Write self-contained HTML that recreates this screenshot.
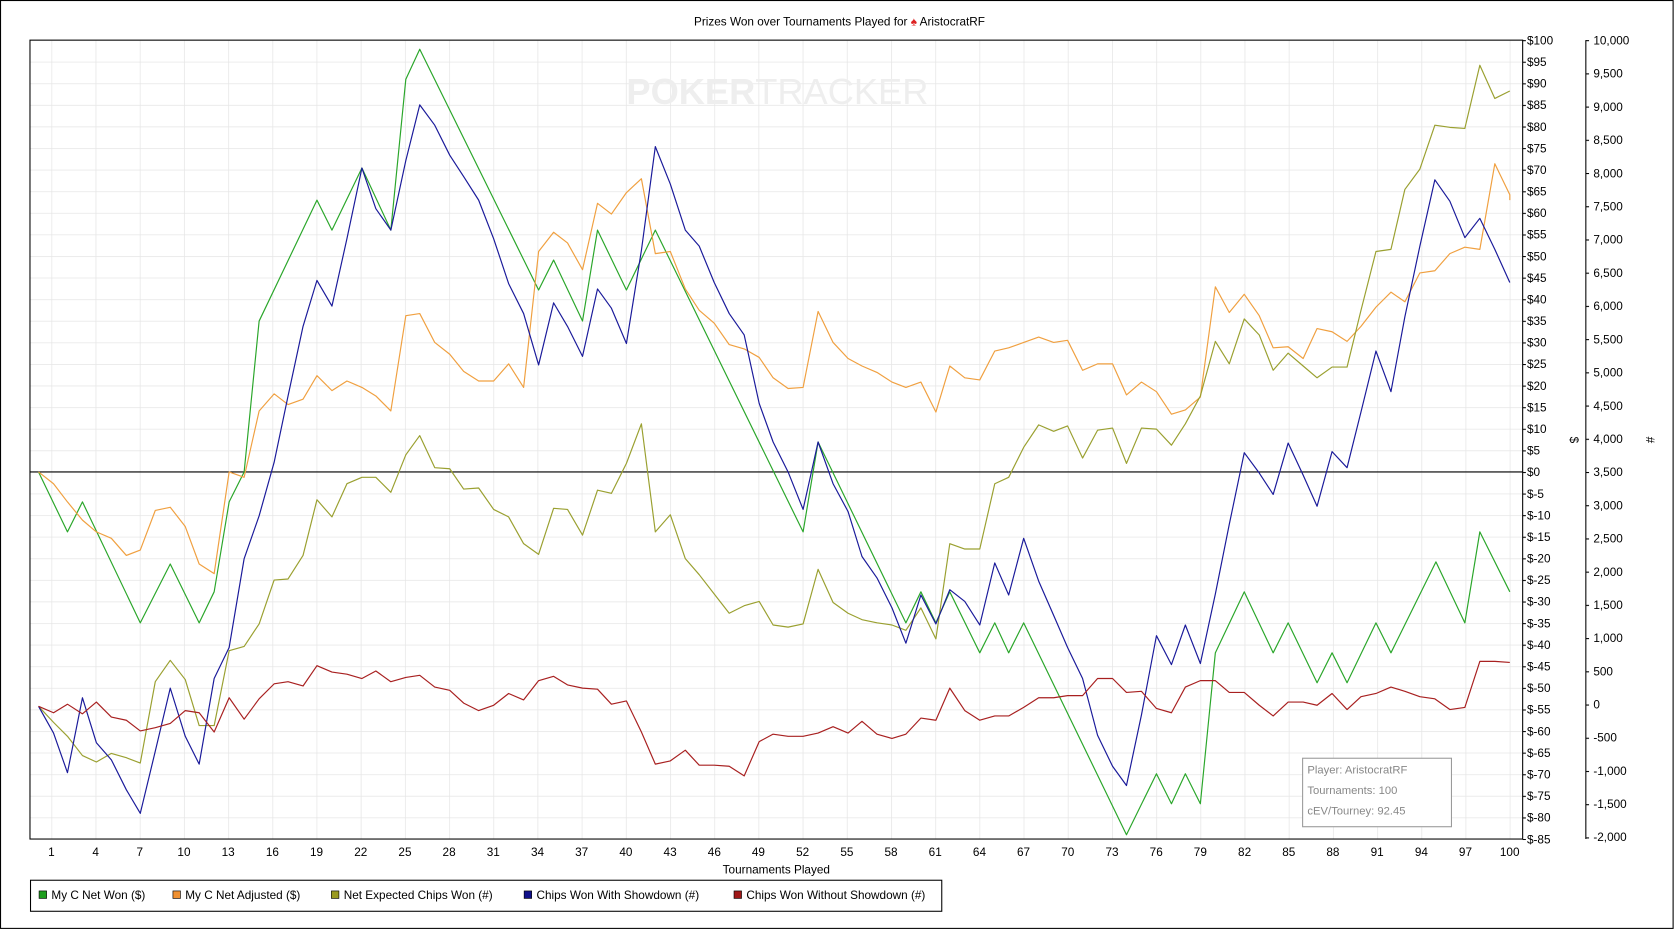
<!DOCTYPE html>
<html><head><meta charset="utf-8"><style>
html,body{margin:0;padding:0;background:#fff;}
svg{display:block;}
text{font-family:"Liberation Sans",Arial,sans-serif;}
</style></head><body>
<svg width="1679" height="930" viewBox="0 0 1568 869" preserveAspectRatio="none" xmlns="http://www.w3.org/2000/svg">
<defs>
<pattern id="gh" x="0" y="37.5" width="2000" height="20.175" patternUnits="userSpaceOnUse"><line x1="0" y1="0.3" x2="2000" y2="0.3" stroke="#e6e6e6" stroke-width="0.8"/></pattern>
<pattern id="gv" x="48" y="0" width="41.27" height="2000" patternUnits="userSpaceOnUse"><line x1="0.3" y1="0" x2="0.3" y2="2000" stroke="#e6e6e6" stroke-width="0.8"/></pattern>
<pattern id="t1" x="0" y="37.5" width="10" height="20.175" patternUnits="userSpaceOnUse"><line x1="0" y1="0.5" x2="10" y2="0.5" stroke="#000" stroke-width="1"/></pattern>
<pattern id="t2" x="0" y="37.5" width="10" height="31.04" patternUnits="userSpaceOnUse"><line x1="0" y1="0.5" x2="10" y2="0.5" stroke="#000" stroke-width="1"/></pattern>
</defs>
<rect x="0.5" y="0.5" width="1562" height="867" fill="#fff" stroke="#000" stroke-width="1"/>
<text x="784" y="24" font-size="11" text-anchor="middle">Prizes Won over Tournaments Played for <tspan fill="#d22">♠</tspan> AristocratRF</text>
<rect x="28" y="37.5" width="1394" height="746.5" fill="url(#gh)"/>
<rect x="28" y="37.5" width="1394" height="746.5" fill="url(#gv)"/>
<text x="585" y="97" font-size="34" font-weight="bold" fill="#eeeeee" textLength="282" lengthAdjust="spacingAndGlyphs">POKER<tspan font-weight="normal">TRACKER</tspan></text>
<line x1="28" y1="441" x2="1422" y2="441" stroke="#000" stroke-width="1"/>
<g fill="none" stroke-width="1.1" stroke-linejoin="round">
<polyline stroke="#2aa62a" points="36,441 63,497 77,469 131,582 159,527 186,582 200,553 214,469 228,441 242,300 296,187 310,215 338,157 365,215 379,74 392,46 503,271 517,243 544,300 558,215 585,271 612,215 750,497 764,413 846,582 860,553 874,582 887,553 915,610 929,582 942,610 956,582 1052,780 1080,723 1094,751 1107,723 1121,751 1135,610 1162,553 1189,610 1203,582 1230,638 1244,610 1258,638 1285,582 1299,610 1341,525 1368,582 1382,497 1410,553"/>
<polyline stroke="#f0a040" points="36,441 50,452 63,469 77,486 90,497 104,503 118,519 131,514 145,477 159,474 173,492 186,527 200,536 214,441 228,446 242,384 256,368 269,378 283,373 296,351 310,365 324,356 338,362 351,370 365,384 379,295 392,293 406,320 420,331 433,347 447,356 461,356 475,340 489,362 503,235 517,217 530,227 544,252 558,190 571,200 585,180 599,167 612,237 626,235 640,270 653,290 667,302 681,322 695,326 709,334 722,353 736,363 750,362 764,291 778,320 792,335 805,342 819,348 833,357 846,362 860,357 874,385 887,342 901,353 915,355 929,328 942,325 956,320 970,315 984,320 997,318 1011,346 1025,340 1039,340 1052,369 1066,357 1080,366 1094,387 1107,383 1121,371 1135,268 1148,292 1162,275 1176,295 1189,325 1203,324 1217,335 1230,307 1244,310 1258,319 1271,305 1285,287 1299,273 1312,282 1326,255 1340,253 1354,237 1368,231 1382,233 1396,153 1410,182 1410,187"/>
<polyline stroke="#9aa030" points="36,660 50,675 63,688 77,706 90,712 104,704 118,708 131,713 145,637 159,617 173,635 186,678 200,678 214,608 228,604 242,583 256,542 269,541 283,519 296,467 310,483 324,452 338,446 351,446 365,460 379,425 392,407 406,437 420,438 433,457 447,456 461,476 475,483 489,508 503,518 517,475 530,476 544,500 558,458 571,461 585,433 599,396 612,497 626,481 640,522 653,537 667,555 681,573 695,566 709,562 722,584 736,586 750,583 764,532 778,563 792,573 805,579 819,582 833,584 846,589 860,568 874,597 887,508 901,513 915,513 929,452 942,446 956,418 970,397 984,403 997,398 1011,428 1025,402 1039,400 1052,433 1066,400 1080,401 1094,416 1107,396 1121,370 1135,319 1148,340 1162,298 1176,313 1189,346 1203,330 1217,342 1230,353 1244,343 1258,343 1271,290 1285,235 1299,233 1312,177 1326,158 1340,117 1354,119 1368,120 1382,61 1396,92 1410,85"/>
<polyline stroke="#1a1a9a" points="36,660 50,685 63,722 77,652 90,694 104,710 118,738 131,760 145,702 159,643 173,688 186,714 200,634 214,605 228,522 242,482 256,432 269,370 283,305 296,262 310,286 324,223 338,157 351,195 365,215 379,150 392,98 406,117 420,145 433,165 447,187 461,223 475,265 489,293 503,341 517,283 530,305 544,333 558,270 571,288 585,321 599,234 612,137 626,172 640,215 653,230 667,264 681,293 695,313 709,377 722,413 736,441 750,476 764,413 778,452 792,478 805,520 819,540 833,568 846,601 860,556 874,583 887,551 901,562 915,584 929,526 942,556 956,503 970,543 984,575 997,605 1011,634 1025,687 1039,716 1052,734 1066,668 1080,594 1094,621 1107,584 1121,620 1135,555 1148,490 1162,423 1176,442 1189,462 1203,414 1217,444 1230,473 1244,422 1258,437 1271,385 1285,328 1299,366 1312,296 1326,230 1340,168 1354,188 1368,222 1382,204 1396,233 1410,264"/>
<polyline stroke="#a82020" points="36,660 50,666 63,658 77,667 90,656 104,670 118,673 131,683 145,680 159,676 173,664 186,666 200,684 214,652 228,672 242,653 256,639 269,637 283,641 296,622 310,628 324,630 338,634 351,627 365,637 379,633 392,631 406,642 420,645 433,657 447,664 461,659 475,648 489,654 503,636 517,632 530,640 544,643 558,644 571,658 585,655 599,684 612,714 626,711 640,701 653,715 667,715 681,716 695,725 709,693 722,686 736,688 750,688 764,685 778,679 792,685 805,674 819,686 833,690 846,686 860,671 874,673 887,643 901,664 915,673 929,669 942,669 956,661 970,652 984,652 997,650 1011,650 1025,634 1039,634 1052,647 1066,646 1080,662 1094,666 1107,642 1121,636 1135,636 1148,647 1162,647 1176,659 1189,669 1203,656 1217,656 1230,659 1244,648 1258,663 1271,651 1285,648 1299,642 1312,646 1326,651 1340,653 1354,663 1368,661 1382,618 1396,618 1410,619"/>
</g>
<rect x="28" y="37.5" width="1394" height="746.5" fill="none" stroke="#000" stroke-width="1"/>
<rect x="1422" y="37" width="3" height="748" fill="url(#t1)"/>
<line x1="1481" y1="37.5" x2="1481" y2="784" stroke="#000"/>
<rect x="1481" y="37" width="3" height="748" fill="url(#t2)"/>
<g font-size="11" fill="#000">
<text x="1426" y="41.5">$100</text><text x="1426" y="61.7">$95</text><text x="1426" y="81.9">$90</text><text x="1426" y="102">$85</text><text x="1426" y="122.2">$80</text><text x="1426" y="142.4">$75</text><text x="1426" y="162.6">$70</text><text x="1426" y="182.7">$65</text><text x="1426" y="202.9">$60</text><text x="1426" y="223.1">$55</text><text x="1426" y="243.3">$50</text><text x="1426" y="263.4">$45</text><text x="1426" y="283.6">$40</text><text x="1426" y="303.8">$35</text><text x="1426" y="324">$30</text><text x="1426" y="344.1">$25</text><text x="1426" y="364.3">$20</text><text x="1426" y="384.5">$15</text><text x="1426" y="404.7">$10</text><text x="1426" y="424.8">$5</text><text x="1426" y="445">$0</text><text x="1426" y="465.2">$-5</text><text x="1426" y="485.4">$-10</text><text x="1426" y="505.5">$-15</text><text x="1426" y="525.7">$-20</text><text x="1426" y="545.9">$-25</text><text x="1426" y="566">$-30</text><text x="1426" y="586.2">$-35</text><text x="1426" y="606.4">$-40</text><text x="1426" y="626.6">$-45</text><text x="1426" y="646.8">$-50</text><text x="1426" y="666.9">$-55</text><text x="1426" y="687.1">$-60</text><text x="1426" y="707.3">$-65</text><text x="1426" y="727.5">$-70</text><text x="1426" y="747.6">$-75</text><text x="1426" y="767.8">$-80</text><text x="1426" y="788">$-85</text>
<text x="1488" y="41.5">10,000</text><text x="1488" y="72.5">9,500</text><text x="1488" y="103.6">9,000</text><text x="1488" y="134.6">8,500</text><text x="1488" y="165.7">8,000</text><text x="1488" y="196.7">7,500</text><text x="1488" y="227.7">7,000</text><text x="1488" y="258.8">6,500</text><text x="1488" y="289.8">6,000</text><text x="1488" y="320.9">5,500</text><text x="1488" y="351.9">5,000</text><text x="1488" y="382.9">4,500</text><text x="1488" y="414">4,000</text><text x="1488" y="445">3,500</text><text x="1488" y="476">3,000</text><text x="1488" y="507">2,500</text><text x="1488" y="538">2,000</text><text x="1488" y="569">1,500</text><text x="1488" y="600">1,000</text><text x="1488" y="631">500</text><text x="1488" y="662">0</text><text x="1488" y="693">-500</text><text x="1488" y="724">-1,000</text><text x="1488" y="755">-1,500</text><text x="1488" y="786">-2,000</text>
<text x="1466" y="411" transform="rotate(90 1466 411)" text-anchor="middle">$</text>
<text x="1537" y="411" transform="rotate(90 1537 411)" text-anchor="middle">#</text>
</g>
<g font-size="11" text-anchor="middle">
<text x="48" y="800">1</text><text x="89.3" y="800">4</text><text x="130.5" y="800">7</text><text x="171.8" y="800">10</text><text x="213.1" y="800">13</text><text x="254.4" y="800">16</text><text x="295.6" y="800">19</text><text x="336.9" y="800">22</text><text x="378.2" y="800">25</text><text x="419.4" y="800">28</text><text x="460.7" y="800">31</text><text x="502" y="800">34</text><text x="543.2" y="800">37</text><text x="584.5" y="800">40</text><text x="625.8" y="800">43</text><text x="667.1" y="800">46</text><text x="708.3" y="800">49</text><text x="749.6" y="800">52</text><text x="790.9" y="800">55</text><text x="832.1" y="800">58</text><text x="873.4" y="800">61</text><text x="914.7" y="800">64</text><text x="955.9" y="800">67</text><text x="997.2" y="800">70</text><text x="1038.5" y="800">73</text><text x="1079.8" y="800">76</text><text x="1121" y="800">79</text><text x="1162.3" y="800">82</text><text x="1203.6" y="800">85</text><text x="1244.8" y="800">88</text><text x="1286.1" y="800">91</text><text x="1327.4" y="800">94</text><text x="1368.6" y="800">97</text><text x="1409.9" y="800">100</text>
<text x="725" y="816">Tournaments Played</text>
</g>
<rect x="1216.5" y="708.5" width="139" height="64" fill="#fff" stroke="#999"/>
<g font-size="10.5" fill="#888">
<text x="1221" y="723">Player: AristocratRF</text>
<text x="1221" y="742">Tournaments: 100</text>
<text x="1221" y="761">cEV/Tourney: 92.45</text>
</g>
<rect x="28.5" y="822.5" width="851" height="29" fill="#fff" stroke="#000"/>
<g font-size="11">
<rect x="36.5" y="832.5" width="7" height="7" fill="#1e9e1e" stroke="#000" stroke-width="0.6"/><text x="48" y="840">My C Net Won ($)</text>
<rect x="161.5" y="832.5" width="7" height="7" fill="#f09030" stroke="#000" stroke-width="0.6"/><text x="173" y="840">My C Net Adjusted ($)</text>
<rect x="309.5" y="832.5" width="7" height="7" fill="#9a9a20" stroke="#000" stroke-width="0.6"/><text x="321" y="840">Net Expected Chips Won (#)</text>
<rect x="489.5" y="832.5" width="7" height="7" fill="#10108a" stroke="#000" stroke-width="0.6"/><text x="501" y="840">Chips Won With Showdown (#)</text>
<rect x="685.5" y="832.5" width="7" height="7" fill="#a01818" stroke="#000" stroke-width="0.6"/><text x="697" y="840">Chips Won Without Showdown (#)</text>
</g>
</svg>
</body></html>
